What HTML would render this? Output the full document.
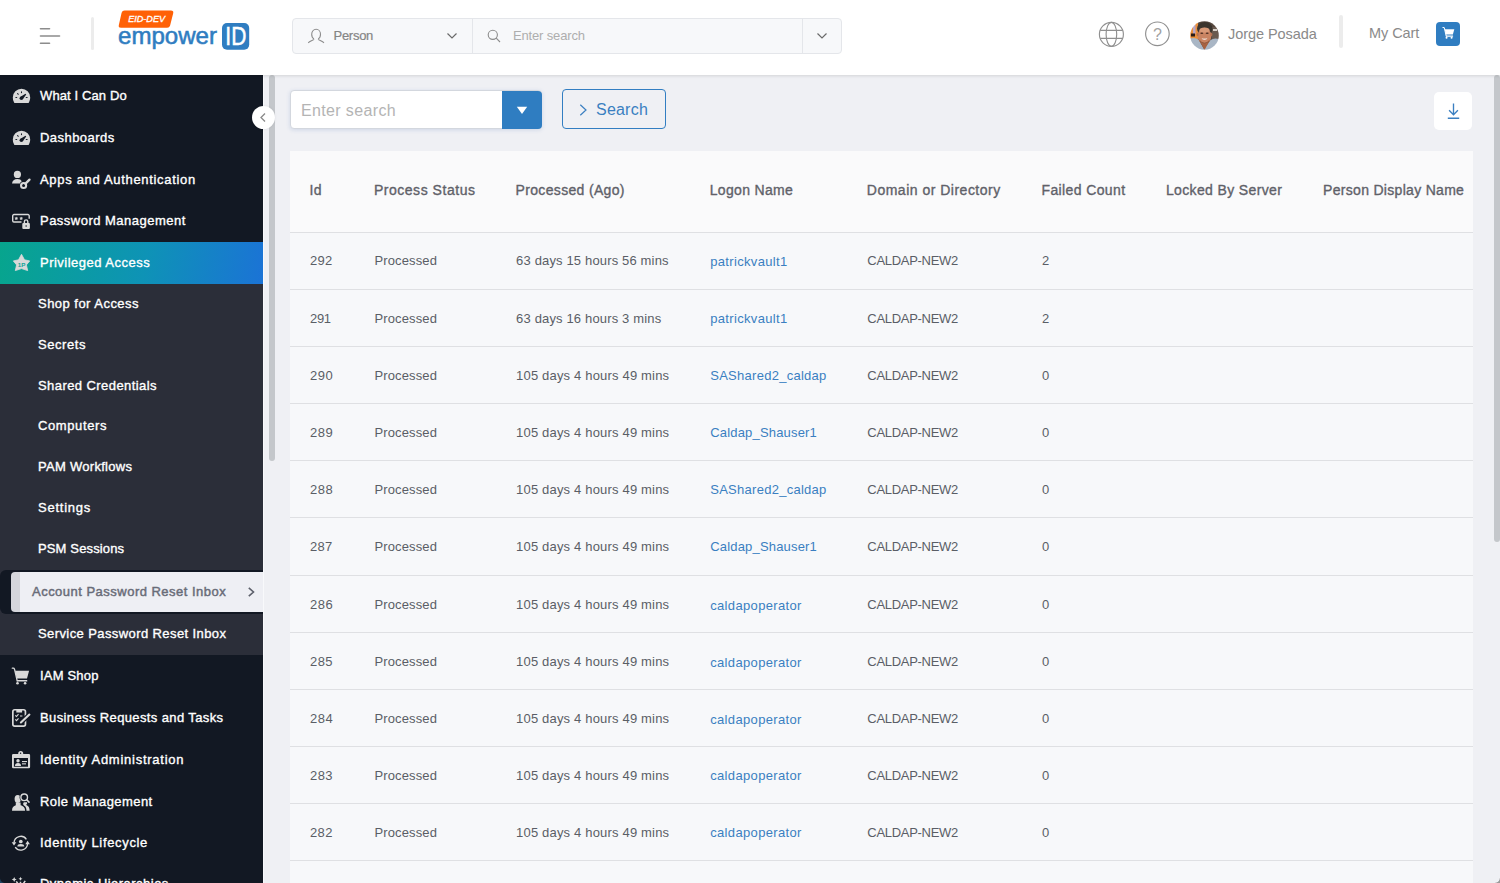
<!DOCTYPE html>
<html lang="en">
<head>
<meta charset="utf-8">
<title>Account Password Reset Inbox</title>
<style>
*{box-sizing:border-box;margin:0;padding:0}
html,body{width:1500px;height:883px;overflow:hidden;background:#eff0f4;font-family:"Liberation Sans",sans-serif;color:#5a5e66}
body{position:relative}
.abs{position:absolute}
/* header */
#hdr{position:absolute;left:0;top:0;width:1500px;height:75px;background:#fff;box-shadow:0 1px 3px rgba(0,0,0,.12);z-index:5}
.vsep{position:absolute;width:3px;background:#ececec;border-radius:2px}
#gsearch{position:absolute;left:292px;top:18px;width:550px;height:36px;border:1px solid #e4e6ea;border-radius:4px;background:#f7f8fa}
#gsearch .d1{position:absolute;left:179px;top:0;width:1px;height:34px;background:#e4e6ea}
#gsearch .d2{position:absolute;left:509px;top:0;width:1px;height:34px;background:#e4e6ea}
.t{position:absolute;white-space:nowrap;line-height:1}
/* sidebar */
#side{position:absolute;left:0;top:75px;width:263px;height:808px;background:#121823;overflow:hidden}
#side .mi{position:absolute;left:40px;color:#fff;font-size:13px;font-weight:normal;-webkit-text-stroke:0.35px;white-space:nowrap;line-height:16px}
#side .si{position:absolute;left:38px;color:#fff;font-size:13px;font-weight:normal;-webkit-text-stroke:0.35px;white-space:nowrap;line-height:16px}
#side svg{position:absolute}
#sub{position:absolute;left:0;top:209px;width:263px;height:370.5px;background:#2b2e39}
#act{position:absolute;left:0;top:167px;width:263px;height:42px;background:linear-gradient(100deg,#07a58d 0%,#0e93b6 55%,#1b73d6 100%)}
#sel{position:absolute;left:11px;top:497px;width:252px;height:40px;background:#eeeff4;border-radius:4px 0 0 4px;border-left:9px solid #d5d6dc}
#selwrap{position:absolute;left:0;top:495px;width:263px;height:44px;background:#121823;border-radius:6px 0 0 6px}
/* main */
#main{position:absolute;left:263px;top:75px;width:1237px;height:808px;background:#eff0f4}
#tbl{position:absolute;left:290px;top:151px;width:1183px;height:740px;background:#f7f8fa}
#tbl .hl{position:absolute;left:0;width:1183px;height:1px;background:#dfe0e3}
#tbl .th{position:absolute;font-weight:normal;-webkit-text-stroke:0.35px;font-size:14px;color:#5f6169;white-space:nowrap;line-height:16px}
#tbl .td{position:absolute;font-size:13px;color:#5a5e66;white-space:nowrap;line-height:16px}
#tbl .lk{color:#3a7fc1}
</style>
</head>
<body>
<div id="main"></div>
<div id="hdr">
<svg class="abs" style="left:38px;top:26px" width="24" height="20" viewBox="0 0 24 20"><g stroke="#8c8c8c" stroke-width="1.6" stroke-linecap="round"><line x1="2.5" y1="2.8" x2="11.5" y2="2.8"/><line x1="2.5" y1="10" x2="21.5" y2="10"/><line x1="2.5" y1="17.2" x2="11.5" y2="17.2"/></g></svg>
<div class="vsep" style="left:91px;top:17px;height:33px"></div>
<svg class="abs" style="left:116px;top:8px" width="140" height="48" viewBox="0 0 140 48">
<path d="M8.600 2.400H54.900Q57.900 2.400 57.200 5.200L54.100 17.500Q53.500 19.700 51.100 19.700H5Q2.200 19.700 2.800 17.200L5.600 4.800Q6.200 2.400 8.600 2.400Z" fill="#ff6106"/>
<text x="12.200" y="14.200" font-family="Liberation Sans, sans-serif" font-size="9.600" font-style="italic" fill="#fff" stroke="#fff" stroke-width=".35" textLength="36.800" lengthAdjust="spacingAndGlyphs">EID-DEV</text>
<text x="2" y="36" font-family="Liberation Sans, sans-serif" font-size="24.300" fill="#2f7dc1" stroke="#2f7dc1" stroke-width=".55" textLength="99" lengthAdjust="spacingAndGlyphs">empower</text>
<rect x="106" y="15" width="27.200" height="26.800" rx="5" fill="#2f7dc1"/>
<text x="109.300" y="37.400" font-family="Liberation Sans, sans-serif" font-size="25.500" fill="#fff" stroke="#fff" stroke-width=".5" textLength="21" lengthAdjust="spacingAndGlyphs">ID</text>
</svg>
<div id="gsearch"><div class="d1"></div><div class="d2"></div>
<svg class="abs" style="left:14px;top:9px" width="18" height="18" viewBox="0 0 18 18" fill="none" stroke="#8c8c8c" stroke-width="1.1"><path d="M7 10.900C5 10 4.700 8 4.700 6.300 4.700 3.500 6.500 1.300 9.100 1.300S13.500 3.500 13.500 6.300C13.500 8 13.200 10 11.200 10.900M7 10.900C6.500 12.500 3.500 12.800 1.200 14.800M11.200 10.900C11.700 12.500 14.700 12.800 17 14.800"/></svg>
<span class="t" id="pers" style="left:40.500px;top:10px;font-size:13px;color:#858585;-webkit-text-stroke:.2px;letter-spacing:-0.267px">Person</span>
<svg class="abs" style="left:153px;top:13px" width="12" height="8" viewBox="0 0 12 8" fill="none" stroke="#6a6a6a" stroke-width="1.2"><path d="M1.5 1.5 6 6 10.500 1.500"/></svg>
<svg class="abs" style="left:193px;top:9px" width="16" height="16" viewBox="0 0 16 16" fill="none" stroke="#8c8c8c" stroke-width="1.1"><circle cx="6.800" cy="6.800" r="4.600"/><path d="M10.200 10.200 14 14"/></svg>
<span class="t" id="gs" style="left:220px;top:10px;font-size:13px;color:#aeaeae;letter-spacing:-0.159px">Enter search</span>
<svg class="abs" style="left:523px;top:13px" width="12" height="8" viewBox="0 0 12 8" fill="none" stroke="#6a6a6a" stroke-width="1.2"><path d="M1.5 1.5 6 6 10.500 1.500"/></svg>
</div>
<svg class="abs" style="left:1097px;top:20px" width="29" height="29" viewBox="0 0 29 29" fill="none" stroke="#909090" stroke-width="1.150"><circle cx="14.400" cy="14.350" r="12"/><ellipse cx="14.400" cy="14.350" rx="5.300" ry="12"/><path d="M3.200 10.300H25.600M3.200 18.400H25.600"/></svg>
<svg class="abs" style="left:1143px;top:20px" width="29" height="29" viewBox="0 0 29 29"><circle cx="14.400" cy="13.800" r="11.800" fill="none" stroke="#909090" stroke-width="1.150"/><text x="14.500" y="19.700" text-anchor="middle" font-family="Liberation Sans, sans-serif" font-size="16" fill="#a2a2a2">?</text></svg>
<svg class="abs" style="left:1190px;top:20.500px" width="29" height="29" viewBox="0 0 29 29"><defs><filter id="avb" x="-10%" y="-10%" width="120%" height="120%"><feGaussianBlur stdDeviation="0.7"/></filter><clipPath id="avc"><circle cx="14.500" cy="14.500" r="14.300"/></clipPath></defs><g clip-path="url(#avc)"><g filter="url(#avb)"><rect width="29" height="29" fill="#54463c"/><rect x="0" y="2" width="8" height="16" fill="#e98f3e"/><rect x="3" y="4" width="2.500" height="9" fill="#b9a7c6"/><rect x="1" y="12.500" width="4" height="3" fill="#2a1c12"/><rect x="22" y="6" width="7" height="12" fill="#6a5a50"/><rect x="23" y="8" width="4" height="2" fill="#d8d0c8"/><path d="M0 17.500Q5 16 8.500 18.500L14 28 20.500 19Q24 16.500 29 18V29H0Z" fill="#a9b6c5"/><path d="M9 19 14.500 29 20 19Z" fill="#a8623f"/><ellipse cx="14.800" cy="7.500" rx="7.800" ry="6.500" fill="#3a342e"/><ellipse cx="14.500" cy="14.800" rx="6.900" ry="8" fill="#c98462"/><ellipse cx="14.500" cy="9" rx="5" ry="2.600" fill="#d99a78"/><ellipse cx="7.600" cy="13.500" rx="1" ry="1.800" fill="#b87252"/><ellipse cx="21.400" cy="13.500" rx="1" ry="1.800" fill="#b87252"/><ellipse cx="11.800" cy="12.200" rx="1.500" ry=".7" fill="#4a2e22"/><ellipse cx="17.200" cy="12.200" rx="1.500" ry=".7" fill="#4a2e22"/><path d="M11.600 17Q14.500 18 17.400 17 16.800 19 14.500 19 12.200 19 11.600 17Z" fill="#ecd9d0"/><path d="M9 18.500Q14.500 25 20 18.500 18 22.800 14.500 22.800 11 22.800 9 18.500Z" fill="#8a5238"/></g></g></svg>
<span class="t" id="jp" style="left:1228px;top:27px;font-size:14.500px;color:#8a8a8a;letter-spacing:-0.057px">Jorge Posada</span>
<div class="vsep" style="left:1339px;top:15px;height:33px;width:3.500px"></div>
<span class="t" id="mc" style="left:1369px;top:26px;font-size:14.500px;color:#8a8a8a;letter-spacing:-0.064px">My Cart</span>
<div class="abs" style="left:1436px;top:22px;width:24px;height:24px;border-radius:4px;background:#2f7dc1"></div>
<svg class="abs" style="left:1441.800px;top:26.300px" width="13.600" height="13.600" viewBox="0 0 20 20"><path d="M1.300 2.200h.9c.7 0 1.100.3 1.300 1L6.200 14.800" fill="none" stroke="#fff" stroke-width="1.500" stroke-linecap="round"/><g fill="#fff"><path d="M4 4.800H18.100L16 12.600H5.800Z"/><rect x="5.800" y="14" width="10.500" height="1.700" rx=".4"/><circle cx="6.700" cy="17.400" r="1.500"/><circle cx="14.100" cy="17.400" r="1.500"/></g></svg>
</div>

<div id="side">
<div id="act"></div>
<div id="sub"></div>
<div id="selwrap"></div>
<div id="sel"></div>
<svg width="20" height="18" viewBox="0 0 20 18" style="left:12px;top:12px"><path fill="#d9d9d9" d="M.8 10.500A8.700 8.700 0 0 1 18.200 10.500c0 1.800-.5 3.500-1.300 4.900-.2.400-.5.600-.9.600H3c-.4 0-.7-.2-.9-.6A9 9 0 0 1 .8 10.500z"/><g fill="#121823"><ellipse cx="9.500" cy="5.300" rx=".55" ry="1.050"/><ellipse cx="5.900" cy="6.900" rx=".55" ry="1.100" transform="rotate(-45 5.900 6.900)"/><ellipse cx="4.300" cy="10.500" rx="1.050" ry=".55"/><ellipse cx="14.700" cy="10.500" rx="1.050" ry=".55"/><circle cx="9.300" cy="11.300" r="1.750"/><path d="M8.100 10.100 13.500 6.700 14.200 7.500 10.600 12.500z"/></g></svg>
<span class="mi" id="m1" style="top:12.5px;letter-spacing:0.118px">What I Can Do</span>
<svg width="20" height="18" viewBox="0 0 20 18" style="left:12px;top:54px"><path fill="#d9d9d9" d="M.8 10.500A8.700 8.700 0 0 1 18.200 10.500c0 1.800-.5 3.500-1.300 4.900-.2.400-.5.600-.9.600H3c-.4 0-.7-.2-.9-.6A9 9 0 0 1 .8 10.500z"/><g fill="#121823"><ellipse cx="9.500" cy="5.300" rx=".55" ry="1.050"/><ellipse cx="5.900" cy="6.900" rx=".55" ry="1.100" transform="rotate(-45 5.900 6.900)"/><ellipse cx="4.300" cy="10.500" rx="1.050" ry=".55"/><ellipse cx="14.700" cy="10.500" rx="1.050" ry=".55"/><circle cx="9.300" cy="11.300" r="1.750"/><path d="M8.100 10.100 13.500 6.700 14.200 7.500 10.600 12.500z"/></g></svg>
<span class="mi" id="m2" style="top:54.5px;letter-spacing:0.449px">Dashboards</span>
<svg width="21" height="22" viewBox="0 0 21 22" style="left:11px;top:94px"><g fill="#d9d9d9"><circle cx="6.400" cy="5.400" r="3.600"/><path d="M1 14.600Q1.600 10 6.400 10Q9.800 10 10.800 12.200Q9.300 13.200 8.900 14.600Z"/></g><g fill="none" stroke="#d9d9d9"><circle cx="12.600" cy="16.500" r="2.550" stroke-width="2.100"/><path d="M14.500 14.600 18.500 10.600" stroke-width="2.300" stroke-linecap="round"/></g></svg>
<span class="mi" id="m3" style="top:96.5px;letter-spacing:0.681px">Apps and Authentication</span>
<svg width="20" height="18" viewBox="0 0 20 18" style="left:11px;top:137px"><path d="M10.500 10H3a1.300 1.300 0 0 1-1.300-1.300V3.800A1.300 1.300 0 0 1 3 2.500h13.900a1.300 1.300 0 0 1 1.300 1.300V6.800" fill="none" stroke="#d9d9d9" stroke-width="1.400"/><g fill="#d9d9d9"><path d="M5.300 4.900l.45.900 1 .15-.75.700.2 1-.9-.5-.9.500.2-1-.75-.7 1-.15zM10.200 4.900l.45.900 1 .15-.75.700.2 1-.9-.5-.9.500.2-1-.75-.7 1-.15z" stroke="#d9d9d9" stroke-width=".5"/><rect x="11.300" y="10.900" width="7.600" height="6" rx="1"/></g><path d="M13.400 11V9.600a1.700 1.700 0 0 1 3.400 0V11" fill="none" stroke="#d9d9d9" stroke-width="1.400"/><circle cx="15.100" cy="14.100" r=".75" fill="#121823"/></svg>
<span class="mi" id="m4" style="top:137.5px;letter-spacing:0.485px">Password Management</span>
<svg width="21" height="21" viewBox="0 0 21 21" style="left:11px;top:177px"><path fill="#d9d9d9" stroke="#d9d9d9" stroke-width=".8" stroke-linejoin="round" d="M10.500 2.300 13.500 7.800 18.700 8.900 15.400 12.900 16.700 18.600 10.500 16.600 4.300 18.600 5.600 12.900 2.300 8.900 7.500 7.800Z"/><text x="10.600" y="14.700" font-size="6.200" font-weight="bold" text-anchor="middle" fill="#12a598" font-family="Liberation Sans, sans-serif">1P</text></svg>
<span class="mi" id="m5" style="top:179.5px;letter-spacing:0.489px">Privileged Access</span>
<svg width="20" height="20" viewBox="0 0 20 20" style="left:11px;top:591px"><path d="M1.300 2.200h.9c.7 0 1.100.3 1.300 1L6.200 14.800" fill="none" stroke="#d9d9d9" stroke-width="1.300" stroke-linecap="round"/><g fill="#d9d9d9"><path d="M4 4.800H18.100L16 12.600H5.800Z"/><rect x="5.800" y="14" width="10.500" height="1.600" rx=".4"/><circle cx="6.500" cy="17.300" r="1.300"/><circle cx="14.100" cy="17.300" r="1.300"/></g></svg>
<span class="mi" id="m6" style="top:592.5px;letter-spacing:0.188px">IAM Shop</span>
<svg width="21" height="22" viewBox="0 0 21 22" style="left:11px;top:632px"><rect x="1.850" y="2.750" width="12.600" height="16.400" rx="1.900" fill="none" stroke="#d9d9d9" stroke-width="1.700"/><rect x="5.300" y="2.600" width="5.800" height="2.900" fill="#d9d9d9"/><g fill="none" stroke="#d9d9d9" stroke-width="1.100"><path d="M4.300 8.300l1.200 1.200 2-2.300M4.300 12.400l1.200 1.200 2-2.300M9 9h2.400"/></g><path d="M9.900 15.500 18.400 7.600" stroke="#121823" stroke-width="4.600" stroke-linecap="round"/><path d="M9.900 15.500 18.400 7.600" stroke="#d9d9d9" stroke-width="2.100" stroke-linecap="round"/></svg>
<span class="mi" id="m7" style="top:634.5px;letter-spacing:0.378px">Business Requests and Tasks</span>
<svg width="20" height="20" viewBox="0 0 20 20" style="left:11px;top:675px"><g fill="#d9d9d9"><path fill-rule="evenodd" d="M2.300 4H17.800A1.300 1.300 0 0 1 19.100 5.300V17A1.300 1.300 0 0 1 17.800 18.300H2.300A1.300 1.300 0 0 1 1 17V5.300A1.300 1.300 0 0 1 2.300 4ZM2.900 8V16.700H17V8Z"/><path d="M7.200 4.500V3.400a2.500 2.500 0 0 1 5 0V4.500z"/><circle cx="7" cy="10.700" r="1.700"/><path d="M4 15.900c0-2 1.200-2.800 3-2.800s3 .8 3 2.800z"/><rect x="11" y="11" width="5" height="1.100"/><rect x="11" y="13.300" width="4" height="1.100"/></g><circle cx="9.600" cy="3.300" r=".7" fill="#121823"/></svg>
<span class="mi" id="m8" style="top:676.5px;letter-spacing:0.74px">Identity Administration</span>
<svg width="20" height="20" viewBox="0 0 20 20" style="left:11px;top:717px"><g fill="#d9d9d9"><path d="M15.500 18.800c0-2.600-.8-4.200-2.600-5.200l-.9-1.600.8-1.800h3.400c0 1.300-.5 2.200-1.200 2.800 2.200.9 3.600 2 3.600 5.800z"/><ellipse cx="6.700" cy="7" rx="3.100" ry="3.900"/><path d="M1 18.800c0-3.500 1.500-4.800 3.800-5.600V10.500h4.800v2.700c2.500.8 4.500 2.100 4.500 5.600z"/></g><circle cx="13.200" cy="5.300" r="3.300" fill="#121823" stroke="#121823" stroke-width="2.800"/><path d="M15.700 7.800 18 10.100" stroke="#121823" stroke-width="2.800" stroke-linecap="round"/><circle cx="13.200" cy="5.300" r="3.300" fill="none" stroke="#d9d9d9" stroke-width="1.400"/><path d="M15.700 7.800 18 10.100" stroke="#d9d9d9" stroke-width="1.600" stroke-linecap="round"/></svg>
<span class="mi" id="m9" style="top:718.5px;letter-spacing:0.424px">Role Management</span>
<svg width="20" height="20" viewBox="0 0 20 20" style="left:11px;top:758px"><g fill="none" stroke="#d9d9d9" stroke-width="1.300"><path d="M3 9.600A6.800 6.800 0 0 1 15.400 6.300"/><path d="M16.600 10.800A6.800 6.800 0 0 1 4.200 14.100"/></g><g fill="#d9d9d9"><path d="M.7 9.200H5.300L3 12.600zM14.300 11.200H18.900L16.600 7.800z"/><circle cx="9.800" cy="8.500" r="1.850"/><path d="M6.300 13.600c0-1.800 1.300-2.600 3.500-2.600s3.500.8 3.500 2.600z"/></g></svg>
<span class="mi" id="m10" style="top:759.5px;letter-spacing:0.661px">Identity Lifecycle</span>
<svg width="20" height="10" viewBox="0 0 20 10" style="left:11px;top:800.5px"><g fill="#d9d9d9"><path d="M3.200 1l.8 1.700 1.700.8-1.700.8-.8 1.700-.8-1.700-1.700-.8 1.700-.8z"/><path d="M9.500 .8l.6 1.400 1.400.6-1.400.6-.6 1.400-.6-1.400-1.400-.6 1.400-.6z"/></g><g fill="none" stroke="#d9d9d9" stroke-width="1.500"><path d="M5.300 5.300 7.800 9M9.500 5.800V9M14.200 4.800 11.500 9"/></g></svg>
<span class="mi" id="m11" style="top:801.3px;letter-spacing:0.467px">Dynamic Hierarchies</span>
<span class="si" id="m12" style="top:220.5px;letter-spacing:0.47px">Shop for Access</span>
<span class="si" id="m13" style="top:261.5px;letter-spacing:0.56px">Secrets</span>
<span class="si" id="m14" style="top:302.5px;letter-spacing:0.428px">Shared Credentials</span>
<span class="si" id="m15" style="top:342.5px;letter-spacing:0.602px">Computers</span>
<span class="si" id="m16" style="top:383.5px;letter-spacing:0.282px">PAM Workflows</span>
<span class="si" id="m17" style="top:424.5px;letter-spacing:0.752px">Settings</span>
<span class="si" id="m18" style="top:465.5px;letter-spacing:0.138px">PSM Sessions</span>
<span class="si" id="m19" style="top:550.5px;letter-spacing:0.406px">Service Password Reset Inbox</span>
<span class="si" id="selt" style="top:508.5px;left:32px;color:#696c78;-webkit-text-stroke:.45px;letter-spacing:0.484px">Account Password Reset Inbox</span>
<svg style="left:246px;top:511px" width="10" height="12" viewBox="0 0 10 12" fill="none" stroke="#5d606b" stroke-width="1.600"><path d="M2.800 1.800 7.500 6 2.800 10.200"/></svg>
</div>
<div class="abs" style="left:269px;top:75px;width:6px;height:386px;background:#c4c7cb;border-radius:3px;z-index:3"></div>
<div class="abs" style="left:252px;top:106px;width:23px;height:23px;border-radius:50%;background:#fff;z-index:4;box-shadow:0 0 3px rgba(0,0,0,.08)"><svg class="abs" style="left:6px;top:6px" width="10" height="11" viewBox="0 0 10 11" fill="none" stroke="#8a8a8a" stroke-width="1.300"><path d="M7 1.500 3 5.500 7 9.500"/></svg></div>
<div id="tbl">
<div class="abs" style="left:0;top:0;width:1183px;height:81px;background:#fafafb"></div>
<span class="th" id="h0" style="left:19.5px;top:31.15px;letter-spacing:0.356px">Id</span>
<span class="th" id="h1" style="left:83.9px;top:31.15px;letter-spacing:0.532px">Process Status</span>
<span class="th" id="h2" style="left:225.6px;top:31.15px;letter-spacing:0.328px">Processed (Ago)</span>
<span class="th" id="h3" style="left:419.7px;top:31.15px;letter-spacing:0.333px">Logon Name</span>
<span class="th" id="h4" style="left:576.8px;top:31.15px;letter-spacing:0.496px">Domain or Directory</span>
<span class="th" id="h5" style="left:751.5px;top:31.15px;letter-spacing:0.384px">Failed Count</span>
<span class="th" id="h6" style="left:875.9px;top:31.15px;letter-spacing:0.369px">Locked By Server</span>
<span class="th" id="h7" style="left:1033.1px;top:31.15px;letter-spacing:0.3px">Person Display Name</span>
<div class="hl" style="top:81px"></div>
<div class="hl" style="top:138px"></div>
<div class="hl" style="top:195px"></div>
<div class="hl" style="top:252px"></div>
<div class="hl" style="top:309px"></div>
<div class="hl" style="top:366px"></div>
<div class="hl" style="top:424px"></div>
<div class="hl" style="top:481px"></div>
<div class="hl" style="top:538px"></div>
<div class="hl" style="top:595px"></div>
<div class="hl" style="top:652px"></div>
<div class="hl" style="top:709px"></div>
<div class="hl" style="top:766px"></div>
<span class="td" id="r0a" style="left:20px;top:101.8px;letter-spacing:0.299px">292</span>
<span class="td" id="r0b" style="left:84.4px;top:101.8px;letter-spacing:0.131px">Processed</span>
<span class="td" id="r0c" style="left:226.1px;top:101.8px;letter-spacing:0.155px">63 days 15 hours 56 mins</span>
<span class="td lk" id="r0d" style="left:420.2px;top:102.8px;letter-spacing:0.332px">patrickvault1</span>
<span class="td" id="r0e" style="left:577.3px;top:101.8px;letter-spacing:-0.293px">CALDAP-NEW2</span>
<span class="td" id="r0f" style="left:752px;top:101.8px">2</span>
<span class="td" id="r1a" style="left:20px;top:159.8px;letter-spacing:-0.301px">291</span>
<span class="td" id="r1b" style="left:84.4px;top:159.8px;letter-spacing:0.131px">Processed</span>
<span class="td" id="r1c" style="left:226.1px;top:159.8px;letter-spacing:0.155px">63 days 16 hours 3 mins</span>
<span class="td lk" id="r1d" style="left:420.2px;top:159.8px;letter-spacing:0.332px">patrickvault1</span>
<span class="td" id="r1e" style="left:577.3px;top:159.8px;letter-spacing:-0.293px">CALDAP-NEW2</span>
<span class="td" id="r1f" style="left:752px;top:159.8px">2</span>
<span class="td" id="r2a" style="left:20px;top:216.8px;letter-spacing:0.499px">290</span>
<span class="td" id="r2b" style="left:84.4px;top:216.8px;letter-spacing:0.131px">Processed</span>
<span class="td" id="r2c" style="left:226.1px;top:216.8px;letter-spacing:0.18px">105 days 4 hours 49 mins</span>
<span class="td lk" id="r2d" style="left:420.2px;top:216.8px;letter-spacing:0.273px">SAShared2_caldap</span>
<span class="td" id="r2e" style="left:577.3px;top:216.8px;letter-spacing:-0.293px">CALDAP-NEW2</span>
<span class="td" id="r2f" style="left:752px;top:216.8px">0</span>
<span class="td" id="r3a" style="left:20px;top:273.8px;letter-spacing:0.499px">289</span>
<span class="td" id="r3b" style="left:84.4px;top:273.8px;letter-spacing:0.131px">Processed</span>
<span class="td" id="r3c" style="left:226.1px;top:273.8px;letter-spacing:0.18px">105 days 4 hours 49 mins</span>
<span class="td lk" id="r3d" style="left:420.2px;top:273.8px;letter-spacing:0.181px">Caldap_Shauser1</span>
<span class="td" id="r3e" style="left:577.3px;top:273.8px;letter-spacing:-0.293px">CALDAP-NEW2</span>
<span class="td" id="r3f" style="left:752px;top:273.8px">0</span>
<span class="td" id="r4a" style="left:20px;top:330.8px;letter-spacing:0.566px">288</span>
<span class="td" id="r4b" style="left:84.4px;top:330.8px;letter-spacing:0.131px">Processed</span>
<span class="td" id="r4c" style="left:226.1px;top:330.8px;letter-spacing:0.18px">105 days 4 hours 49 mins</span>
<span class="td lk" id="r4d" style="left:420.2px;top:330.8px;letter-spacing:0.273px">SAShared2_caldap</span>
<span class="td" id="r4e" style="left:577.3px;top:330.8px;letter-spacing:-0.293px">CALDAP-NEW2</span>
<span class="td" id="r4f" style="left:752px;top:330.8px">0</span>
<span class="td" id="r5a" style="left:20px;top:387.8px;letter-spacing:0.299px">287</span>
<span class="td" id="r5b" style="left:84.4px;top:387.8px;letter-spacing:0.131px">Processed</span>
<span class="td" id="r5c" style="left:226.1px;top:387.8px;letter-spacing:0.18px">105 days 4 hours 49 mins</span>
<span class="td lk" id="r5d" style="left:420.2px;top:387.8px;letter-spacing:0.181px">Caldap_Shauser1</span>
<span class="td" id="r5e" style="left:577.3px;top:387.8px;letter-spacing:-0.293px">CALDAP-NEW2</span>
<span class="td" id="r5f" style="left:752px;top:387.8px">0</span>
<span class="td" id="r6a" style="left:20px;top:445.8px;letter-spacing:0.499px">286</span>
<span class="td" id="r6b" style="left:84.4px;top:445.8px;letter-spacing:0.131px">Processed</span>
<span class="td" id="r6c" style="left:226.1px;top:445.8px;letter-spacing:0.18px">105 days 4 hours 49 mins</span>
<span class="td lk" id="r6d" style="left:420.2px;top:446.8px;letter-spacing:0.348px">caldapoperator</span>
<span class="td" id="r6e" style="left:577.3px;top:445.8px;letter-spacing:-0.293px">CALDAP-NEW2</span>
<span class="td" id="r6f" style="left:752px;top:445.8px">0</span>
<span class="td" id="r7a" style="left:20px;top:502.8px;letter-spacing:0.432px">285</span>
<span class="td" id="r7b" style="left:84.4px;top:502.8px;letter-spacing:0.131px">Processed</span>
<span class="td" id="r7c" style="left:226.1px;top:502.8px;letter-spacing:0.18px">105 days 4 hours 49 mins</span>
<span class="td lk" id="r7d" style="left:420.2px;top:503.8px;letter-spacing:0.348px">caldapoperator</span>
<span class="td" id="r7e" style="left:577.3px;top:502.8px;letter-spacing:-0.293px">CALDAP-NEW2</span>
<span class="td" id="r7f" style="left:752px;top:502.8px">0</span>
<span class="td" id="r8a" style="left:20px;top:559.8px;letter-spacing:0.566px">284</span>
<span class="td" id="r8b" style="left:84.4px;top:559.8px;letter-spacing:0.131px">Processed</span>
<span class="td" id="r8c" style="left:226.1px;top:559.8px;letter-spacing:0.18px">105 days 4 hours 49 mins</span>
<span class="td lk" id="r8d" style="left:420.2px;top:560.8px;letter-spacing:0.348px">caldapoperator</span>
<span class="td" id="r8e" style="left:577.3px;top:559.8px;letter-spacing:-0.293px">CALDAP-NEW2</span>
<span class="td" id="r8f" style="left:752px;top:559.8px">0</span>
<span class="td" id="r9a" style="left:20px;top:616.8px;letter-spacing:0.432px">283</span>
<span class="td" id="r9b" style="left:84.4px;top:616.8px;letter-spacing:0.131px">Processed</span>
<span class="td" id="r9c" style="left:226.1px;top:616.8px;letter-spacing:0.18px">105 days 4 hours 49 mins</span>
<span class="td lk" id="r9d" style="left:420.2px;top:616.8px;letter-spacing:0.348px">caldapoperator</span>
<span class="td" id="r9e" style="left:577.3px;top:616.8px;letter-spacing:-0.293px">CALDAP-NEW2</span>
<span class="td" id="r9f" style="left:752px;top:616.8px">0</span>
<span class="td" id="r10a" style="left:20px;top:673.8px;letter-spacing:0.366px">282</span>
<span class="td" id="r10b" style="left:84.4px;top:673.8px;letter-spacing:0.131px">Processed</span>
<span class="td" id="r10c" style="left:226.1px;top:673.8px;letter-spacing:0.18px">105 days 4 hours 49 mins</span>
<span class="td lk" id="r10d" style="left:420.2px;top:673.8px;letter-spacing:0.348px">caldapoperator</span>
<span class="td" id="r10e" style="left:577.3px;top:673.8px;letter-spacing:-0.293px">CALDAP-NEW2</span>
<span class="td" id="r10f" style="left:752px;top:673.8px">0</span>
</div>
<div class="abs" style="left:290px;top:90px;width:252px;height:39px;border-radius:4px;background:#fff;border:1px solid #d3d7de;box-shadow:0 1px 4px rgba(60,100,180,.18)"></div>
<div class="abs" style="left:502px;top:91px;width:40px;height:38px;border-radius:0 4px 4px 0;background:#2f7dc1"></div>
<svg class="abs" style="left:516px;top:106px" width="12" height="9" viewBox="0 0 12 9"><path d="M.8 .8h10.400L6 8.100z" fill="#fff"/></svg>
<span class="t" id="ts" style="left:301px;top:101.5px;font-size:16px;line-height:18px;color:#b4b4b4;letter-spacing:0.357px">Enter search</span>
<div class="abs" style="left:562px;top:89px;width:104px;height:40px;border-radius:4px;border:1px solid #327ec2"></div>
<svg class="abs" style="left:578px;top:103px" width="10" height="14" viewBox="0 0 10 14" fill="none" stroke="#3a7fc1" stroke-width="1.200"><path d="M2.300 1.800 8 7 2.300 12.200"/></svg>
<span class="t" id="sb" style="left:596px;top:100.700px;font-size:16px;line-height:18px;color:#3a7fc1;letter-spacing:0.216px">Search</span>
<div class="abs" style="left:1434px;top:92px;width:38px;height:38px;border-radius:5px;background:#fff"></div>
<svg class="abs" style="left:1445px;top:102px" width="17" height="18" viewBox="0 0 17 18" fill="none" stroke="#3a7fc1" stroke-width="1.350"><path d="M8.500 1.500V12.500M4.100 8.300 8.500 12.700 12.900 8.300M2.800 16.200H14.200"/></svg>
<div class="abs" style="left:263px;top:75px;width:1px;height:808px;background:#f8f9fb"></div>
<div class="abs" style="left:0;top:878px;width:5px;height:5px;z-index:9;background:radial-gradient(circle at 100% 0,rgba(26,58,85,0) 4.500px,#1d4260 5.400px)"></div>
<div class="abs" style="left:1495px;top:878px;width:5px;height:5px;z-index:9;background:radial-gradient(circle at 0 0,rgba(150,150,150,0) 4.300px,#9a9a9a 5.200px)"></div>
<div class="abs" style="left:1494px;top:75px;width:6px;height:466.500px;background:#c4c7cb;border-radius:3px"></div>
</body>
</html>
